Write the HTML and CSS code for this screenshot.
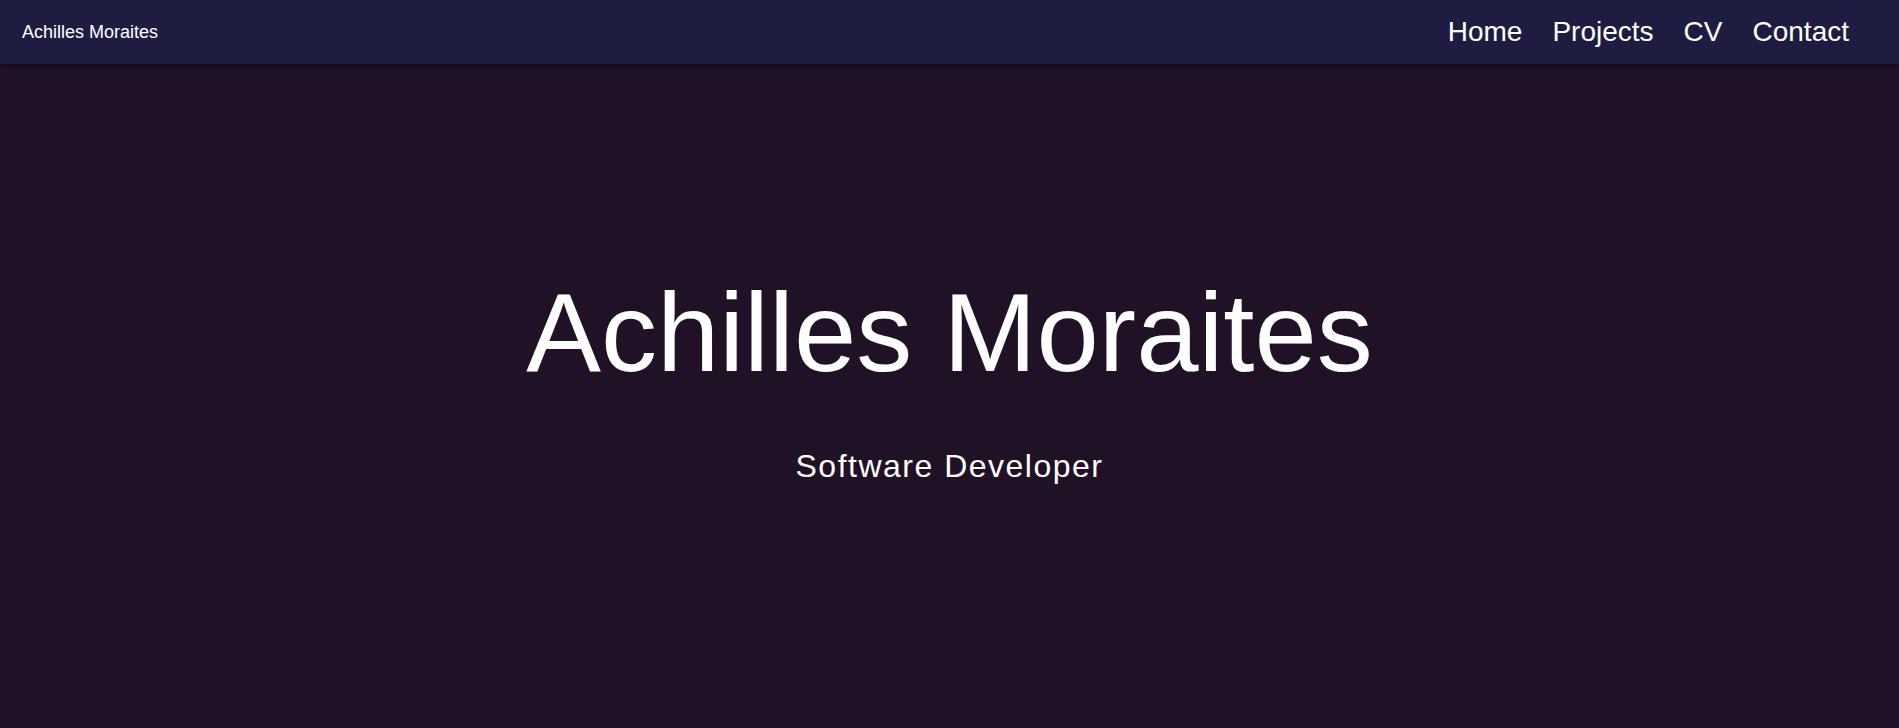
FILE: index.html
```html
<!DOCTYPE html>
<html lang="en">
<head>
<meta charset="utf-8">
<title>Achilles Moraites</title>
<link rel="stylesheet" href="styles.css">
</head>
<body>
<header class="navbar">
  <a class="brand" href="#">Achilles Moraites</a>
  <nav class="nav-links">
    <a href="#">Home</a>
    <a href="#">Projects</a>
    <a href="#">CV</a>
    <a href="#">Contact</a>
  </nav>
</header>
<main class="hero">
  <h1 class="hero-title">Achilles Moraites</h1>
  <p class="hero-subtitle">Software Developer</p>
</main>
</body>
</html>
```

FILE: styles.css
```css
html, body {
  margin: 0;
  padding: 0;
  height: 100%;
}
body {
  background: #201127;
  color: #ffffff;
  font-family: "Liberation Sans", Arial, sans-serif;
  overflow: hidden;
}
a {
  color: #ffffff;
  text-decoration: none;
}
.navbar {
  position: relative;
  z-index: 2;
  height: 64px;
  background: #1f1c41;
  display: flex;
  align-items: center;
  justify-content: space-between;
  padding: 0 50px 0 22px;
  box-shadow: 0 2px 6px rgba(0, 0, 0, 0.45);
}
.brand {
  font-size: 18px;
}
.nav-links {
  display: flex;
  gap: 30px;
  font-size: 28px;
}
.hero {
  display: flex;
  flex-direction: column;
  align-items: center;
  padding-top: 202px;
}
.hero-title {
  margin: 0;
  font-size: 112px;
  font-weight: 400;
  line-height: 1.2;
}
.hero-subtitle {
  margin: 47px 0 0;
  font-size: 32px;
  line-height: 1.2;
  letter-spacing: 1.5px;
}
```
